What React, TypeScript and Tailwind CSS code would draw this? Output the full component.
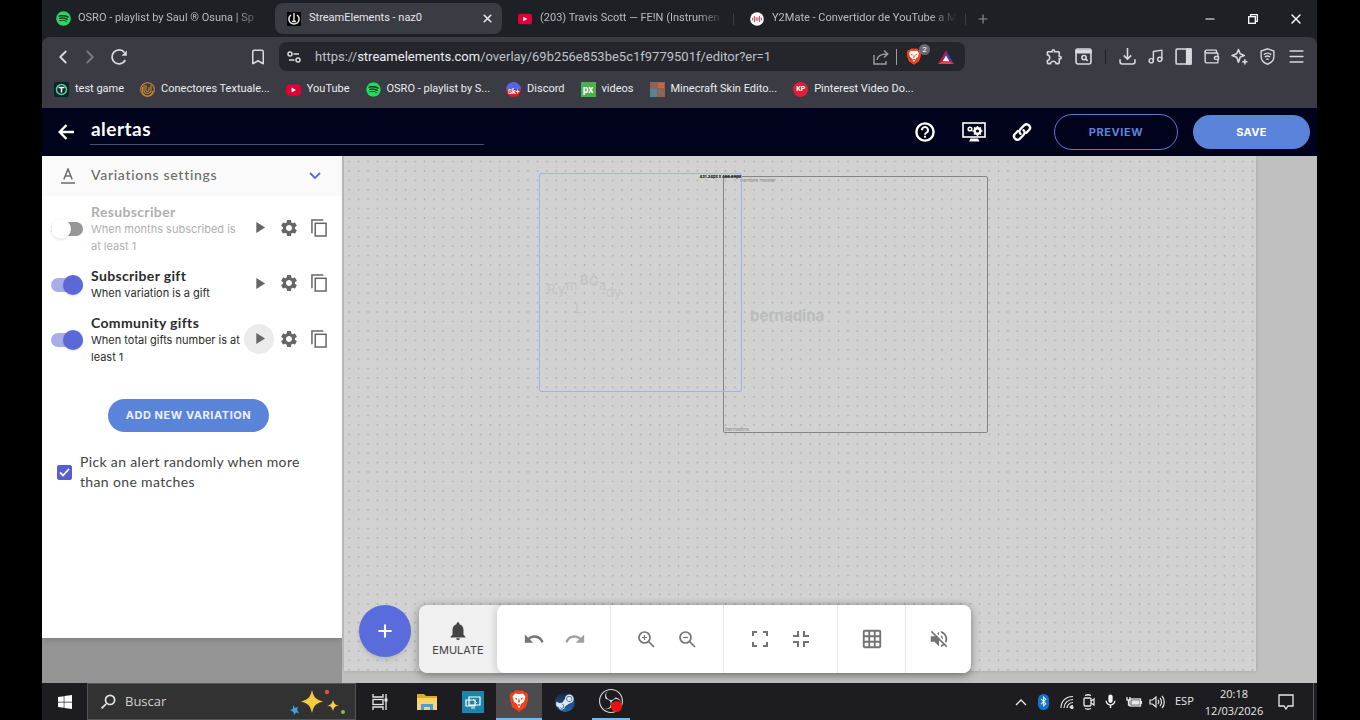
import React, { useState } from 'react';
import { ChevronLeft, ChevronRight, Bookmark, Music, Wallet, Menu, X, Plus, Minus } from 'lucide-react';
import { FaSpotify, FaWindows, FaSteamSymbol, FaBluetoothB } from 'react-icons/fa';
import { SiObsstudio } from 'react-icons/si';
import {
    MdSettings, MdPlayArrow, MdUndo, MdRedo,
    MdGridOn, MdNotifications, MdVolumeOff, MdMic, MdSearch, MdOutlineExtension
} from 'react-icons/md';

interface Variation {
    id: number;
    title: string;
    description: string;
    enabled: boolean;
}

const initialVariations: Variation[] = [
    { id: 1, title: "Resubscriber", description: "When months subscribed is at least 1", enabled: false },
    { id: 2, title: "Subscriber gift", description: "When variation is a gift", enabled: true },
    { id: 3, title: "Community gifts", description: "When total gifts number is at least 1", enabled: true },
];

function SpotifyIcon() {
    return (
        <span className="flex size-[15px] items-center justify-center rounded-full bg-[#12301d]">
            <FaSpotify className="size-[15px] text-[#2bd463]"/>
        </span>
    );
}

function YoutubeIcon() {
    return (
        <svg viewBox="0 0 16 12" className="w-4 h-3">
            <rect width="16" height="12" rx="3" fill="#e00035"/>
            <path d="M6 3.4v5.2L10.6 6z" fill="#fff"/>
        </svg>
    );
}

function StreamElementsIcon() {
    return (
        <svg viewBox="0 0 14 14" className="size-[14px]">
            <rect width="14" height="14" fill="#050505"/>
            <path d="M4 3C.5 5.500 1.500 12 7 12s6.500-6.500 3-9" fill="none" stroke="#e8e8e8" strokeWidth="1.500"/>
            <path d="M7 1v9M5 9.500h4" stroke="#e8e8e8" strokeWidth="1.400"/>
        </svg>
    );
}

function Y2MateIcon() {
    return (
        <svg viewBox="0 0 16 16" className="size-4">
            <circle cx="8" cy="8" r="7.800" fill="#fff"/>
            <path d="M3 6.500v3M5 4.500v7M7 6v4M9 6v4M11 4.500v7M13 6.500v3" stroke="#c8365c" strokeWidth="1.100"/>
        </svg>
    );
}

function BraveIcon({ className }: { className: string }) {
    return (
        <svg viewBox="0 0 20 22" className={className}>
            <path d="M6 .5h8l2 2.200 2-.2 1.500 3.500-.7 2 .3 2-2.600 7.500L10 21.800 3.500 17.500.9 10l.3-2-.7-2L2 2.500l2 .2z" fill="#f0401c"/>
            <path d="M10 4l4-.5 2.500 3.300-1.500 5-2.500 1.700L10 18.500 7.500 13.500 5 11.800l-1.500-5L6 3.500z" fill="#fff"/>
            <path d="M5.500 7.500l2.700 1-.4 1.800zM14.500 7.500l-2.700 1 .4 1.800zM10 8l1 3.500-1 1.500-1-1.500zM8 15l2-1 2 1-2 1z" fill="#f0401c"/>
        </svg>
    );
}

function BatIcon() {
    return (
        <svg viewBox="0 0 16 14" className="w-4 h-[14px]">
            <path d="M8 0L0 14l8-5z" fill="#b0185c"/>
            <path d="M8 0l8 14-8-5z" fill="#5b2fa8"/>
            <path d="M0 14h16L8 9z" fill="#e8404f"/>
            <path d="M8 5.500l3.200 5.500H4.800z" fill="#fff"/>
        </svg>
    );
}

function TabItem({ icon, title, active }: { icon: React.ReactNode; title: string; active?: boolean }) {
    return (
        <button role="tab" aria-selected={!!active}
            className={`flex h-[31px] w-[227px] min-w-0 items-center gap-2 rounded-lg pl-3 pr-2 text-left text-[11px] ${active ? 'bg-[#3a3c44] text-[#e4e6ea]' : 'text-[#b9bcc1]'}`}>
            <span className="flex w-[14px] shrink-0 justify-center">{icon}</span>
            <span className={`flex-1 whitespace-nowrap ${active ? '' : '[mask-image:linear-gradient(to_right,black_85%,transparent)]'}`}>{title}</span>
            {active && <X className="size-[13px]" strokeWidth={3}/>}
        </button>
    );
}

function BookmarkItem({ icon, title }: { icon: React.ReactNode; title: string }) {
    return (
        <a href="#" className="flex items-center gap-[6px] whitespace-nowrap">
            <span className="flex size-[15px] items-center justify-center">{icon}</span>
            {title}
        </a>
    );
}

function BrowserChrome() {
    return (
        <div className="bg-[#1d2025] font-['Roboto','Noto_Sans',sans-serif] text-[#d8dade]">
            <div className="flex h-[37px] items-center justify-between">
                <div role="tablist" className="flex items-center gap-1 pl-[2px]">
                    <TabItem icon={<SpotifyIcon/>} title="OSRO - playlist by Saul ® Osuna | Sp"/>
                    <TabItem icon={<StreamElementsIcon/>} title="StreamElements - naz0" active/>
                    <TabItem icon={<YoutubeIcon/>} title="(203) Travis Scott — FE!N (Instrumen"/>
                    <span className="-ml-1 h-3 w-px bg-[#3c3f46]"/>
                    <TabItem icon={<Y2MateIcon/>} title="Y2Mate - Convertidor de YouTube a M"/>
                    <span className="-ml-1 h-3 w-px bg-[#3c3f46]"/>
                    <button aria-label="New tab" className="pl-[6px] text-[#8d9096]"><Plus className="size-[14px]"/></button>
                </div>
                <div className="flex items-center text-white">
                    <button aria-label="Minimize" className="flex w-[43px] justify-center"><Minus className="size-[14px]" strokeWidth={2}/></button>
                    <button aria-label="Restore" className="flex w-[43px] justify-center">
                        <svg viewBox="0 0 10 10" className="size-[10px]" fill="none" stroke="currentColor" strokeWidth="1.300">
                            <rect x=".7" y="2.700" width="6.600" height="6.600"/><path d="M2.700 2.500V.7h6.600v6.600H7.500"/>
                        </svg>
                    </button>
                    <button aria-label="Close" className="flex w-[43px] justify-center"><X className="size-4" strokeWidth={2}/></button>
                </div>
            </div>
            <div className="flex h-[71px] flex-col rounded-t-lg bg-[#3a3b43]">
                <div className="flex h-[39px] items-center">
                    <div className="flex w-[237px] shrink-0 items-center pl-[10px] pr-3">
                        <button aria-label="Back" className="flex w-[27px]"><ChevronLeft className="size-[22px]"/></button>
                        <button aria-label="Forward" className="flex w-[27px] text-[#797b82]"><ChevronRight className="size-[22px]"/></button>
                        <button aria-label="Reload" className="flex w-7 pl-1">
                            <svg viewBox="0 0 18 18" className="size-[18px]" fill="none" stroke="currentColor" strokeWidth="1.800">
                                <path d="M15.300 12A7 7 0 1 1 14.500 4.500"/>
                                <path d="M16.800 2.500v5.300h-5.300z" fill="currentColor" stroke="none"/>
                            </svg>
                        </button>
                        <button aria-label="Bookmark this tab" className="ml-auto"><Bookmark className="size-[18px]"/></button>
                    </div>
                    <div className="flex h-[29px] max-w-[686px] flex-1 items-center rounded-lg bg-[#24262c] px-2">
                        <svg viewBox="0 0 14 12" className="mr-[14px] h-3 w-[14px]" fill="none" stroke="currentColor" strokeWidth="1.500">
                            <circle cx="3" cy="3" r="2"/><circle cx="11" cy="9" r="2"/>
                            <path d="M6.500 3H12M2 9h5.500"/>
                        </svg>
                        <div className="flex-1 whitespace-nowrap text-[13px] text-[#bfc2c8]">
                            https://<span className="text-[#eceef2]">streamelements.com</span>/overlay/69b256e853be5c1f9779501f/editor?er=1
                        </div>
                        <button aria-label="Share">
                            <svg viewBox="0 0 16 16" className="size-4 text-[#9a9ca3]" fill="none" stroke="currentColor" strokeWidth="1.400">
                                <path d="M1 6v9h12v-3M4 11c.5-4 4-6 10-6M11 1.500L14.800 5 11 8.500"/>
                            </svg>
                        </button>
                        <span className="mx-[7px] h-4 w-px bg-[#9a9ca3]"/>
                        <button aria-label="Brave Shields" className="relative ml-[2px] mr-4">
                            <BraveIcon className="h-[17px] w-4"/>
                            <span className="absolute -right-2 -top-1 size-[11px] rounded-full bg-[#686b76] text-center text-[8px] leading-[11px] text-white">2</span>
                        </button>
                        <button aria-label="Rewards" className="mr-[3px]"><BatIcon/></button>
                    </div>
                    <div className="ml-auto flex items-center gap-[11px] pr-[11px]">
                        <MdOutlineExtension className="size-[19px]"/>
                        <svg viewBox="0 0 16 16" className="size-[17px]" fill="none" stroke="currentColor" strokeWidth="1.500">
                            <rect x="1" y="1" width="14" height="14" rx="1.500"/>
                            <path d="M1 2.500h14v2H1z" fill="currentColor"/>
                            <circle cx="8.500" cy="9" r="2"/><path d="M10 10.500l2 1.500"/>
                        </svg>
                        <span className="mx-[2px] h-[14px] w-px bg-[#1d2025]"/>
                        <svg viewBox="0 0 16 16" className="size-[17px]" fill="none" stroke="currentColor" strokeWidth="1.500">
                            <path d="M8 0v10M4.500 7L8 10.500 11.500 7M1 10.500V13a2 2 0 0 0 2 2h10a2 2 0 0 0 2-2v-2.500"/>
                        </svg>
                        <Music className="size-[17px]"/>
                        <svg viewBox="0 0 16 16" className="size-[17px]" fill="none" stroke="currentColor" strokeWidth="1.500">
                            <rect x="1" y="1" width="14" height="14" rx="1"/>
                            <path d="M11 1h4v14h-4z" fill="currentColor"/>
                        </svg>
                        <Wallet className="size-[17px]"/>
                        <svg viewBox="0 0 16 16" className="size-[17px]" fill="none" stroke="currentColor" strokeWidth="1.500">
                            <path d="M7 1.500l1.600 3.900L12.500 7 8.600 8.600 7 13.500 5.400 8.600 1 7l4.400-1.600zM13 10.500v5M10.500 13h5" strokeLinejoin="round"/>
                        </svg>
                        <svg viewBox="0 0 16 16" className="size-[17px]" fill="none" stroke="currentColor" strokeWidth="1.300">
                            <path d="M8 .8l6 2V8c0 3.500-2.500 6-6 7.300C4.500 14 2 11.500 2 8V2.800z"/>
                            <path d="M4.500 6.200c2-1.600 5-1.600 7 0M5.500 8.500c1.500-1.200 3.500-1.200 5 0M7 10.800c.6-.5 1.400-.5 2 0"/>
                        </svg>
                        <Menu className="size-[19px]"/>
                    </div>
                </div>
                <nav aria-label="Bookmarks" className="flex h-[27px] items-center gap-4 pl-3 text-[11px] text-[#eceef2]">
                    <BookmarkItem title="test game" icon={
                        <svg viewBox="0 0 15 15"><rect width="15" height="15" rx="2" fill="#08252b"/><circle cx="7.500" cy="7.500" r="5" fill="none" stroke="#58d48c" strokeWidth="1.500"/><path d="M4.500 5.500h6M7.500 5.500v5" stroke="#fff" strokeWidth="1.600"/></svg>}/>
                    <BookmarkItem title="Conectores Textuale..." icon={
                        <svg viewBox="0 0 15 15" fill="none" stroke="#d08a2c" strokeWidth="1.100"><circle cx="7.500" cy="7.500" r="6.800"/><path d="M4 3v5a3.500 3.500 0 0 0 7 0V3M6 3v5a1.500 1.500 0 0 0 3 0V5M2.500 5v4a5 5 0 0 0 10 0"/></svg>}/>
                    <BookmarkItem title="YouTube" icon={<YoutubeIcon/>}/>
                    <BookmarkItem title="OSRO - playlist by S..." icon={<SpotifyIcon/>}/>
                    <BookmarkItem title="Discord" icon={
                        <span className="flex size-[15px] flex-col items-center justify-end rounded-full bg-linear-to-b from-[#5565e8] from-45% to-[#d81c35] to-45% pb-px text-[7px] font-bold leading-[8px] text-white">Sk+</span>}/>
                    <BookmarkItem title="videos" icon={
                        <span className="flex size-[15px] items-center justify-center bg-[#4caf50] text-[10px] font-bold leading-none text-white">px</span>}/>
                    <BookmarkItem title="Minecraft Skin Edito..." icon={
                        <svg viewBox="0 0 15 15"><rect width="15" height="15" fill="#96604f"/><path d="M0 7h7v8H0z" fill="#4a88a0"/><path d="M8 1h6v5H8z" fill="#c86446"/><path d="M1 2h5v3H1zM8 8h5v5H8z" fill="#786a68"/><path d="M3 9l3 4M9 9l4 3" stroke="#c86446"/></svg>}/>
                    <BookmarkItem title="Pinterest Video Do..." icon={
                        <span className="flex size-[15px] items-center justify-center rounded-full bg-[#e01f36] text-[7px] font-bold leading-none text-white">KP</span>}/>
                </nav>
            </div>
        </div>
    );
}

function EditorHeader() {
    return (
        <header className="flex h-12 items-center bg-[#00031b] pl-4 pr-[7px] text-white">
            <button aria-label="Back to overlays" className="mr-4">
                <svg viewBox="0 0 16 16" className="size-4" fill="none" stroke="currentColor" strokeWidth="2.400"><path d="M16 8H2M8.500 1L1.700 8l6.800 7"/></svg>
            </button>
            <input aria-label="Overlay name" defaultValue="alertas"
                className="h-[25px] w-[394px] border-b border-[#48506a] bg-transparent pb-1 pl-px font-['Lato','Liberation_Sans',sans-serif] text-[19px] font-bold tracking-wide outline-none"/>
            <div className="ml-auto flex items-center">
                <button aria-label="Help" className="mr-[27px]">
                    <svg viewBox="0 0 20 20" className="size-5" fill="none" stroke="currentColor" strokeWidth="2.400">
                        <circle cx="10" cy="10" r="8.600"/>
                        <path d="M7 8.200a3 3 0 1 1 4.600 2.400c-1 .7-1.600 1-1.600 2.200" strokeWidth="2"/>
                        <path d="M10 13.800v2" strokeWidth="2"/>
                    </svg>
                </button>
                <button aria-label="Canvas settings" className="mr-[26px]">
                    <svg viewBox="0 0 24 20" className="h-5 w-6" fill="none" stroke="currentColor" strokeWidth="1.600">
                        <rect x="1" y="1" width="22" height="14"/>
                        <path d="M7 19.500h10.500l-1.500-3H8.500z" fill="currentColor" stroke="none"/>
                        <circle cx="8" cy="7" r="1.800"/>
                        <circle cx="15.500" cy="9" r="2.800" strokeWidth="2.400"/>
                        <path d="M15.500 4v2M15.500 12v2M10.500 9h2M18.500 9h2M12 5.500l1.400 1.400M17.700 11.200l1.300 1.300M19 5.500l-1.400 1.400M13.400 11.200L12 12.500"/>
                    </svg>
                </button>
                <button aria-label="Copy overlay link" className="mr-[22px]">
                    <svg viewBox="0 0 20 20" className="size-5" fill="none" stroke="currentColor" strokeWidth="2.400" strokeLinecap="round">
                        <path d="M8.500 11.800a3.400 3.400 0 0 1 0-4.800l3.800-3.800a3.400 3.400 0 0 1 4.800 4.800l-3 3"/>
                        <path d="M11.500 8.200a3.400 3.400 0 0 1 0 4.800l-3.800 3.800a3.400 3.400 0 0 1-4.800-4.800l3-3"/>
                    </svg>
                </button>
                <button className="mr-[15px] h-9 w-[124px] rounded-full border border-[#5a7dcd] text-[11px] font-bold tracking-wider text-[#5a84da]">PREVIEW</button>
                <button className="h-[34px] w-[117px] rounded-full bg-[#5a84da] text-[11px] font-bold tracking-wide">SAVE</button>
            </div>
        </header>
    );
}

function VariationRow({ variation, onToggle }: { variation: Variation; onToggle: (id: number) => void }) {
    const toggleId = `variation-${variation.id}`;

    return (
        <li className="flex items-center pl-[9px] pr-2">
            <input id={toggleId} type="checkbox" checked={variation.enabled} onChange={() => onToggle(variation.id)}
                className="relative h-[14px] w-8 shrink-0 appearance-none rounded-full bg-[#979797] before:absolute before:-top-[3px] before:left-0 before:size-5 before:rounded-full before:bg-white before:shadow checked:bg-[#a6afea] checked:before:left-auto checked:before:right-0 checked:before:bg-[#5a68d8]"/>
            <label htmlFor={toggleId} className={`ml-2 flex-1 ${variation.enabled ? 'text-[#2b2b2b]' : 'text-[#b0b0b0]'}`}>
                <span className="block font-['Lato','Liberation_Sans',sans-serif] text-[14px] font-bold leading-[18px] tracking-wide">{variation.title}</span>
                <span className="block text-[11px] leading-[17px]">{variation.description}</span>
            </label>
            <div className="flex shrink-0 items-center pb-[3px] text-[#666]">
                <button aria-label={`Play ${variation.title}`}
                    className={`flex size-[30px] items-center justify-center rounded-full ${variation.id === 3 ? 'bg-[#ebebeb]' : ''}`}>
                    <MdPlayArrow className="size-[19px]"/>
                </button>
                <button aria-label={`${variation.title} settings`} className="flex size-[30px] items-center justify-center">
                    <MdSettings className="size-5"/>
                </button>
                <button aria-label={`Duplicate ${variation.title}`} className="flex size-[30px] items-center justify-center">
                    <svg viewBox="0 0 17 19" className="h-[18px] w-4" fill="none" stroke="currentColor" strokeWidth="1.600">
                        <path d="M1 15V1h12"/><rect x="4.500" y="4.500" width="11.500" height="13.500"/>
                    </svg>
                </button>
            </div>
        </li>
    );
}

function Sidebar() {
    const [variations, setVariations] = useState<Variation[]>(initialVariations);

    const handleToggle = (id: number) => {
        setVariations(variations.map((v) => v.id === id ? { ...v, enabled: !v.enabled } : v));
    };

    return (
        <aside className="flex w-[300px] shrink-0 flex-col bg-[#959595] pb-[45px]">
            <div className="flex flex-1 flex-col bg-white shadow-md">
                <button aria-expanded="true" className="flex h-10 items-center bg-[#fafafa] pl-[19px] pr-[21px] text-[#6b6b6b]">
                    <svg viewBox="0 0 14 16" className="h-4 w-[14px]" fill="none" stroke="currentColor" strokeWidth="1.500">
                        <path d="M2.800 11.500L7 1l4.200 10.500M4.300 8h5.400M0 15h14"/>
                    </svg>
                    <span className="ml-4 flex-1 pb-1 text-left font-['Lato','Liberation_Sans',sans-serif] text-[14px] font-medium tracking-wider">Variations settings</span>
                    <svg viewBox="0 0 12 8" className="h-2 w-3" fill="none" stroke="#5a68d8" strokeWidth="1.800"><path d="M1 1l5 5 5-5"/></svg>
                </button>
                <ul className="flex flex-col gap-3 pt-[7px]">
                    {variations.map((variation) => (
                        <VariationRow key={variation.id} variation={variation} onToggle={handleToggle}/>
                    ))}
                </ul>
                <button className="ml-[66px] mt-[33px] h-[33px] w-[161px] self-start rounded-full bg-[#5a84da] text-[11px] font-bold tracking-wider text-[#eaf0fd]">ADD NEW VARIATION</button>
                <label className="mt-5 flex items-center gap-2 pl-[15px] pr-6 font-['Lato','Liberation_Sans',sans-serif] text-[14px] leading-5 tracking-wide text-[#444]">
                    <span className="relative flex size-[15px] shrink-0">
                        <input type="checkbox" defaultChecked className="peer size-[15px] appearance-none rounded-xs border border-[#5a5fd0] checked:bg-[#5a5fd0]"/>
                        <svg viewBox="0 0 15 15" className="pointer-events-none absolute inset-0 hidden peer-checked:block" fill="none" stroke="#fff" strokeWidth="1.800"><path d="M3 7.500l3 3 6-6.500"/></svg>
                    </span>
                    Pick an alert randomly when more than one matches
                </label>
            </div>
        </aside>
    );
}

function ToolButton({ label, children }: { label: string; children: React.ReactNode }) {
    return <button aria-label={label} title={label} className="flex w-[41px] items-center justify-center">{children}</button>;
}

function CanvasToolbar() {
    return (
        <div className="absolute bottom-[10px] left-[17px] flex items-start gap-2">
            <button aria-label="Add widget" className="flex size-[52px] items-center justify-center rounded-full bg-[#5a6bdc] text-white shadow-md">
                <Plus className="size-5" strokeWidth={2.5}/>
            </button>
            <div className="flex h-[68px] rounded-lg bg-[#f0f0f0] text-[#737373] shadow-[0_2px_10px_rgba(0,0,0,0.4)]">
                <button className="flex w-[78px] flex-col items-center justify-center text-[11px] leading-4 text-[#444]">
                    <MdNotifications className="size-[22px]"/>
                    EMULATE
                </button>
                <div className="flex rounded-lg bg-white shadow-[-3px_0_6px_rgba(0,0,0,0.12)]">
                    <div className="flex border-r border-[#e6e6e6] pl-4 pr-[15px]">
                        <ToolButton label="Undo"><MdUndo className="size-[22px]"/></ToolButton>
                        <ToolButton label="Redo"><MdRedo className="size-[22px] text-[#a0a0a0]"/></ToolButton>
                    </div>
                    <div className="flex border-r border-[#e6e6e6] px-[15px]">
                        <ToolButton label="Zoom in">
                            <svg viewBox="0 0 17 17" className="size-[17px]" fill="none" stroke="currentColor" strokeWidth="1.700">
                                <circle cx="6.500" cy="6.500" r="5.500"/><path d="M10.500 10.500l5.500 5.500"/><path d="M4 6.500h5M6.500 4v5" strokeWidth="1.200"/>
                            </svg>
                        </ToolButton>
                        <ToolButton label="Zoom out">
                            <svg viewBox="0 0 17 17" className="size-[17px]" fill="none" stroke="currentColor" strokeWidth="1.700">
                                <circle cx="6.500" cy="6.500" r="5.500"/><path d="M10.500 10.500l5.500 5.500"/><path d="M4 6.500h5" strokeWidth="1.200"/>
                            </svg>
                        </ToolButton>
                    </div>
                    <div className="flex border-r border-[#e6e6e6] pl-[15px] pr-4">
                        <ToolButton label="Fit to screen">
                            <svg viewBox="0 0 16 16" className="size-4" fill="none" stroke="currentColor" strokeWidth="2"><path d="M1 5V1h4M11 1h4v4M15 11v4h-4M5 15H1v-4"/></svg>
                        </ToolButton>
                        <ToolButton label="Actual size">
                            <svg viewBox="0 0 16 16" className="size-4" fill="none" stroke="currentColor" strokeWidth="2"><path d="M0 5h5V0M11 0v5h5M16 11h-5v5M5 16v-5H0"/></svg>
                        </ToolButton>
                    </div>
                    <div className="flex border-r border-[#e6e6e6] px-[13px]">
                        <ToolButton label="Grid"><MdGridOn className="size-[22px]"/></ToolButton>
                    </div>
                    <div className="flex px-3">
                        <ToolButton label="Mute"><MdVolumeOff className="size-[22px]"/></ToolButton>
                    </div>
                </div>
            </div>
        </div>
    );
}

function Canvas() {
    return (
        <main className="relative flex flex-1 bg-[#c0c0c0] pb-3 pl-[2px] pr-[61px]">
            <div className="relative flex-1 overflow-hidden bg-[#d2d2d2] shadow-[0_0_4px_rgba(0,0,0,0.15)]">
                <svg className="absolute inset-0 size-full" aria-hidden="true">
                    <defs>
                        <pattern id="dots" width="9.41" height="9.41" patternUnits="userSpaceOnUse">
                            <rect x="4.500" y="4.800" width="1.400" height="1.400" fill="#a2a4a5"/>
                        </pattern>
                    </defs>
                    <rect width="100%" height="100%" fill="url(#dots)"/>
                </svg>
                <div className="absolute left-[379px] top-5 flex h-[257px] w-[265px] flex-col justify-between rounded-xs border border-[#858585] text-[5px] leading-[6px] text-[#8c8c8c]">
                    <span className="pl-4">nombre master</span>
                    <span className="pl-px">bernadina</span>
                    <span className="absolute left-[26px] top-[130px] text-[15px] font-bold leading-[18px] text-[#bbbcbc]">bernadina</span>
                </div>
                <div className="absolute left-[195px] top-[17px] h-[219px] w-[203px] rounded-xs border border-[#9db2f5]">
                    <span className="absolute right-0 top-0 whitespace-nowrap text-[4px] font-bold leading-[6px] text-black">431.34px x 466.68px</span>
                    <svg viewBox="0 0 201 217" className="size-full" fill="#c3c4c4" fontSize="13">
                        <text x="7" y="120">R</text>
                        <text x="18" y="120">y</text>
                        <text x="26" y="116">m</text>
                        <text x="40" y="111" fontWeight="700">B</text>
                        <text x="49" y="112">G</text>
                        <text x="59" y="116">a</text>
                        <text x="66" y="123">dy</text>
                        <text x="35" y="139">L</text>
                    </svg>
                </div>
            </div>
            <CanvasToolbar/>
        </main>
    );
}

function Taskbar() {
    return (
        <footer className="flex h-[37px] items-stretch bg-[#1d1c20] font-['Open_Sans','Noto_Sans',sans-serif] text-white">
            <button aria-label="Start" className="flex w-[45px] items-center justify-center"><FaWindows className="size-4"/></button>
            <label className="flex w-[269px] items-center border border-[#55565a] bg-[#323232] pl-[10px] pr-2">
                <MdSearch className="size-5 -scale-x-100 text-[#e4e4e4]"/>
                <input type="text" aria-label="Buscar" placeholder="Buscar"
                    className="ml-[7px] min-w-0 flex-1 bg-transparent text-[13px] outline-none placeholder:text-[#d0d0d0]"/>
                <svg viewBox="0 0 58 26" className="h-[26px] w-[58px]">
                    <path d="M23 1c2 8 4 9.500 11 11.500C27 14.500 25 16 23 24c-2-8-4-9.500-11-11.500C19 10.500 21 9 23 1z" fill="#f8cb3c"/>
                    <path d="M44 11c1 3.800 2 4.800 6 5.500-4 .7-5 1.700-6 5.500-1-3.800-2-4.800-6-5.500 4-.7 5-1.700 6-5.500z" fill="#f5cf55"/>
                    <path d="M4 16l2 3 3-1-1 3 2 3-3-.5L5 26l-.5-3L1 21l3-1z" fill="#39a9e0"/>
                    <circle cx="38" cy="3" r="2.200" fill="#d8563c"/>
                    <circle cx="54" cy="23" r="2" fill="#7cc05c"/>
                </svg>
            </label>
            <button aria-label="Task view" className="flex w-12 items-center justify-center">
                <svg viewBox="0 0 16 16" className="size-4" fill="none" stroke="#e8e8e8" strokeWidth="1.300"><path d="M1 0v3h10V0M1 16v-3h10v3M14 0v16"/><rect x="1" y="5.500" width="10" height="5"/><path d="M12.500 6h3" strokeWidth="3"/></svg>
            </button>
            <button aria-label="File Explorer" className="flex w-[46px] items-center justify-center">
                <svg viewBox="0 0 20 18" className="h-[18px] w-5"><path d="M0 1h7l2 2h11v14H0z" fill="#e0a92e"/><path d="M0 5h20v12H0z" fill="#f8d568"/><path d="M4 17v-6h12v6h-3v-3H7v3z" fill="#4c9fd6"/></svg>
            </button>
            <button aria-label="Remote display" className="flex w-[46px] items-center justify-center">
                <svg viewBox="0 0 22 22" className="size-[22px]"><rect width="22" height="22" fill="#1b85ac"/><path d="M7 6h11v8H7zM4 9h9v6H4zM9 17h4" fill="none" stroke="#fff" strokeWidth="1.200"/><path d="M11 8l4 4" stroke="#fff"/></svg>
            </button>
            <button aria-label="Brave" className="flex w-[46px] items-center justify-center border-b-2 border-[#76b9ed] bg-[#4c4c4e]"><BraveIcon className="h-[22px] w-5"/></button>
            <button aria-label="Steam" className="flex w-[46px] items-center justify-center">
                <span className="flex size-5 items-center justify-center rounded-full bg-linear-to-b from-[#13203f] to-[#1f6eb0]"><FaSteamSymbol className="size-5 text-[#dfe8f2]"/></span>
            </button>
            <button aria-label="OBS Studio" className="flex w-[46px] justify-center">
                <span className="relative flex w-[38px] items-center justify-center border-b-2 border-[#76b9ed]">
                    <SiObsstudio className="size-6 text-[#d8d8d8]"/>
                    <span className="absolute bottom-[6px] right-2 size-[11px] rounded-full bg-[#ee1010]"/>
                </span>
            </button>
            <div className="ml-auto flex items-center text-[#e8e8e8]">
                <div className="flex items-center gap-[7px]">
                    <svg viewBox="0 0 12 8" className="h-2 w-3" fill="none" stroke="currentColor" strokeWidth="1.400"><path d="M1 7l5-5 5 5"/></svg>
                    <span className="mx-1 flex h-4 w-[11px] items-center justify-center rounded-md bg-[#1274cc]"><FaBluetoothB className="size-[11px] text-white"/></span>
                    <svg viewBox="0 0 14 14" className="size-[14px]" fill="none" stroke="currentColor" strokeWidth="1.200"><path d="M1 13C1 6 6 1.500 13 1.500M4 13c0-5 4-8.500 9-8.500M7 13c0-3 3-5.500 6-5.500M10 13c0-1.500 1.500-2.500 3-2.500"/><circle cx="12" cy="12.500" r="1" fill="currentColor"/></svg>
                    <svg viewBox="0 0 14 16" className="h-4 w-[14px]" fill="none" stroke="currentColor" strokeWidth="1.300"><rect x="3" y="4" width="7" height="8" rx="1"/><path d="M10 7l3-2v6l-3-2M4 1.500c2-1 4-1 6 0M4 14.500c2 1 4 1 6 0"/></svg>
                    <MdMic className="size-[17px] text-white"/>
                    <svg viewBox="0 0 16 12" className="h-3 w-4" fill="none" stroke="currentColor" strokeWidth="1.300"><rect x="4" y="3" width="10.500" height="7"/><path d="M6 5h7v3H6z" fill="currentColor"/><path d="M15.500 5v3M1 1v3h3V1M2.500 4v5H4"/></svg>
                    <svg viewBox="0 0 16 14" className="h-[14px] w-4" fill="none" stroke="currentColor" strokeWidth="1.200"><path d="M1 5h2.500L7 2v10L3.500 9H1zM9 5c1 1 1 3 0 4M11 3c2 2 2 6 0 8M13 1c3 3 3 9 0 12"/></svg>
                </div>
                <span className="ml-[10px] w-[18px] text-[11px]">ESP</span>
                <div className="ml-[10px] w-[62px] text-center text-[11px] leading-[17px]">
                    <div>20:18</div>
                    <div>12/03/2026</div>
                </div>
                <button aria-label="Notifications" className="ml-[13px] mr-[19px]">
                    <svg viewBox="0 0 16 16" className="size-4" fill="none" stroke="currentColor" strokeWidth="1.300"><path d="M1 1h14v11h-5l-2 3-2-3H1z"/></svg>
                </button>
            </div>
            <span className="mr-[3px] w-px bg-[#55565a]"/>
        </footer>
    );
}

function App() {
    return (
        <div className="flex min-h-screen flex-col bg-black pl-[42px] pr-[43px] font-['Inter','Liberation_Sans',sans-serif]">
            <BrowserChrome/>
            <EditorHeader/>
            <div className="flex flex-1">
                <Sidebar/>
                <Canvas/>
            </div>
            <Taskbar/>
        </div>
    );
}

export default App;
